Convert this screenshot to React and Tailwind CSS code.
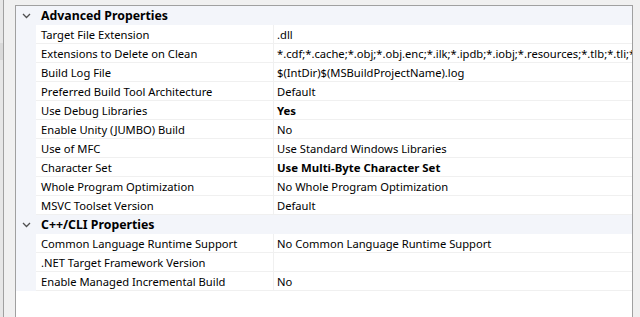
import React from "react";

const groups = [
  {
    title: "Advanced Properties",
    rows: [
      ["Target File Extension", ".dll"],
      ["Extensions to Delete on Clean", "*.cdf;*.cache;*.obj;*.obj.enc;*.ilk;*.ipdb;*.iobj;*.resources;*.tlb;*.tli;*.tlh;*.tmp;*.rsp;*.pgc;*.pgd;*.meta"],
      ["Build Log File", "$(IntDir)$(MSBuildProjectName).log"],
      ["Preferred Build Tool Architecture", "Default"],
      ["Use Debug Libraries", "Yes", true],
      ["Enable Unity (JUMBO) Build", "No"],
      ["Use of MFC", "Use Standard Windows Libraries"],
      ["Character Set", "Use Multi-Byte Character Set", true],
      ["Whole Program Optimization", "No Whole Program Optimization"],
      ["MSVC Toolset Version", "Default"],
    ],
  },
  {
    title: "C++/CLI Properties",
    rows: [
      ["Common Language Runtime Support", "No Common Language Runtime Support"],
      [".NET Target Framework Version", ""],
      ["Enable Managed Incremental Build", "No"],
    ],
  },
];

function Chevron() {
  return (
    <svg width="9" height="6" viewBox="0 0 9 6" className="block">
      <path d="M1 1 L4.5 4.5 L8 1" fill="none" stroke="#505050" strokeWidth="1.3" />
    </svg>
  );
}

export default function App() {
  return (
    <div
      className="w-[640px] h-[317px] bg-[#f0f0f0] flex overflow-hidden text-[11.2px] text-black"
      style={{ fontFamily: '"Noto Sans", "Open Sans", sans-serif' }}
    >
      <div className="w-[4px] shrink-0 h-full bg-[#e6e6e6] border-r border-[#a0a0a0] flex flex-col">
        <div className="h-[43px]" />
        <div className="h-[17px] w-[3px] bg-[#d9d9d9]" />
      </div>
      <div className="w-[11px] shrink-0" />
      <div className="w-[618px] shrink-0 flex flex-col pt-[5px] overflow-hidden">
        <div className="flex-1 bg-white border-l border-t border-r border-[#a0a0a0] overflow-hidden">
          {groups.map((g) => (
            <div key={g.title}>
              <div className="h-[19px] flex items-center bg-[#f3f5fa]">
                <div className="w-[20px] shrink-0 flex justify-center pl-[1px]">
                  <Chevron />
                </div>
                <div className="pl-[5px] pt-[2px] font-bold text-[12.3px] leading-none whitespace-nowrap">{g.title}</div>
              </div>
              {g.rows.map(([name, value, bold]) => (
                <div key={name} className="h-[19px] flex">
                  <div className="w-[20px] shrink-0 bg-[#f3f5fa]" />
                  <div className="w-[237px] shrink-0 border-b border-[#f0f0f0] flex items-center pl-[5px] pt-[2px] whitespace-nowrap overflow-hidden leading-none">
                    {name}
                  </div>
                  <div className="w-[1px] shrink-0 bg-[#f0f0f0]" />
                  <div
                    className={
                      "flex-1 min-w-0 border-b border-[#f0f0f0] flex items-center pl-[3px] pt-[2px] whitespace-nowrap overflow-hidden leading-none " +
                      (bold ? "font-bold text-[11.4px]" : "")
                    }
                  >
                    {value}
                  </div>
                </div>
              ))}
            </div>
          ))}
        </div>
      </div>
      <div className="w-[7px] shrink-0" />
    </div>
  );
}
